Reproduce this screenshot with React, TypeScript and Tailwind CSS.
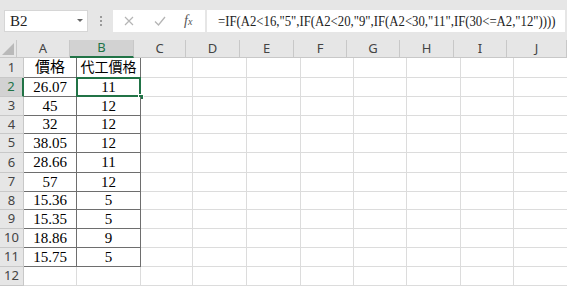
import React from "react";

const cols = [
  { name: "A", w: 53 },
  { name: "B", w: 64 },
  { name: "C", w: 52 },
  { name: "D", w: 54 },
  { name: "E", w: 54 },
  { name: "F", w: 53 },
  { name: "G", w: 53 },
  { name: "H", w: 54 },
  { name: "I", w: 53 },
  { name: "J", w: 60 },
];

const rowHeights = [20, 19, 19, 18, 19, 20, 19, 18, 19, 19, 19, 19];

const data: [string, string][] = [
  ["價格", "代工價格"],
  ["26.07", "11"],
  ["45", "12"],
  ["32", "12"],
  ["38.05", "12"],
  ["28.66", "11"],
  ["57", "12"],
  ["15.36", "5"],
  ["15.35", "5"],
  ["18.86", "9"],
  ["15.75", "5"],
];

const serif = "font-['Liberation_Serif','Noto_Sans_CJK_TC',serif]";

export default function App() {
  return (
    <div className="w-[567px] h-[286px] overflow-hidden bg-[#e6e6e6] font-['Noto_Sans',sans-serif]">
      {/* Formula bar */}
      <div className="h-[40px] flex items-start pt-[10px]">
        <div className="ml-[4px] w-[84px] h-[22px] bg-white border border-[#d6d6d6] flex items-center justify-between pl-[5px] pr-[4px]">
          <span className={`${serif} text-[15px] text-[#222] leading-none`}>B2</span>
          <svg width="6" height="4" viewBox="0 0 6 4">
            <path d="M0 0 L6 0 L3 3 Z" fill="#666" />
          </svg>
        </div>
        <div className="w-[25px] h-[22px] flex flex-col items-center justify-center gap-[2px]">
          <span className="w-[2px] h-[2px] bg-[#9a9a9a]" />
          <span className="w-[2px] h-[2px] bg-[#9a9a9a]" />
          <span className="w-[2px] h-[2px] bg-[#9a9a9a]" />
        </div>
        <div className="w-[92px] h-[22px] bg-white flex items-center">
          <svg className="ml-[11px]" width="10" height="10" viewBox="0 0 10 10">
            <path d="M1 1 L9 9 M9 1 L1 9" stroke="#b5b5b5" strokeWidth="1.2" fill="none" />
          </svg>
          <svg className="ml-[20px]" width="12" height="10" viewBox="0 0 12 10">
            <path d="M1 5.5 L4.5 9 L11 1" stroke="#b5b5b5" strokeWidth="1.3" fill="none" />
          </svg>
          <span className={`ml-[18px] ${serif} italic text-[14px] text-[#555] leading-none`}>
            f<span className="text-[10px]">x</span>
          </span>
        </div>
        <div className="ml-[2px] w-[358px] h-[22px] bg-white flex items-center pl-[11px] overflow-hidden">
          <span className={`inline-block origin-left scale-x-[0.85] ${serif} text-[15px] text-[#222] leading-none whitespace-nowrap`}>
            =IF(A2&lt;16,"5",IF(A2&lt;20,"9",IF(A2&lt;30,"11",IF(30&lt;=A2,"12"))))
          </span>
        </div>
      </div>

      {/* Column headers */}
      <div className="flex h-[18px]">
        <div className="w-[24px] h-full bg-[#e6e6e6] border-r border-b border-[#c8c8c8] relative overflow-hidden">
          <svg className="absolute right-[2px] bottom-[2px]" width="12" height="12" viewBox="0 0 12 12">
            <path d="M12 0 L12 12 L0 12 Z" fill="#b9b9b9" />
          </svg>
        </div>
        {cols.map((c) => (
          <div
            key={c.name}
            style={{ width: c.w }}
            className={
              c.name === "B"
                ? "h-full shrink-0 bg-[#d2d2d2] border-r border-[#c8c8c8] border-b-2 border-b-[#217346] flex items-center justify-center text-[13px] text-[#217346]"
                : "h-full shrink-0 bg-[#e6e6e6] border-r border-b border-[#c8c8c8] flex items-center justify-center text-[13px] text-[#444]"
            }
          >
            {c.name}
          </div>
        ))}
      </div>

      {/* Rows */}
      {rowHeights.map((h, ri) => {
        const rowNum = ri + 1;
        const row = data[ri];
        const selected = rowNum === 2;
        return (
          <div key={rowNum} className="flex" style={{ height: h }}>
            <div
              className={
                selected
                  ? "w-[24px] shrink-0 h-full bg-[#d2d2d2] border-r-2 border-r-[#217346] border-b border-[#c8c8c8] flex items-center justify-center text-[13px] text-[#217346]"
                  : "w-[24px] shrink-0 h-full bg-[#e6e6e6] border-r border-b border-[#c8c8c8] flex items-center justify-center text-[13px] text-[#444]"
              }
            >
              {rowNum}
            </div>
            {cols.map((c, ci) => {
              const inTable = row && ci < 2;
              const isSel = selected && ci === 1;
              const size = rowNum === 1 && ci === 1 ? "text-[14px]" : "text-[15px]";
              return (
                <div
                  key={c.name}
                  style={{ width: c.w }}
                  className={
                    inTable
                      ? `h-full shrink-0 bg-white border-r border-b border-[#6e6e6e] flex items-center justify-center ${serif} ${size} text-black relative`
                      : "h-full shrink-0 bg-white border-r border-b border-[#dcdcdc]"
                  }
                >
                  {inTable ? row[ci] : null}
                  {isSel && (
                    <>
                      <div className="absolute left-[-1px] top-[-1px] right-[-1px] bottom-[-1px] border-2 border-[#217346]" />
                      <div className="absolute right-[-4px] bottom-[-4px] w-[6px] h-[6px] bg-[#217346] border border-white" />
                    </>
                  )}
                </div>
              );
            })}
          </div>
        );
      })}
    </div>
  );
}
